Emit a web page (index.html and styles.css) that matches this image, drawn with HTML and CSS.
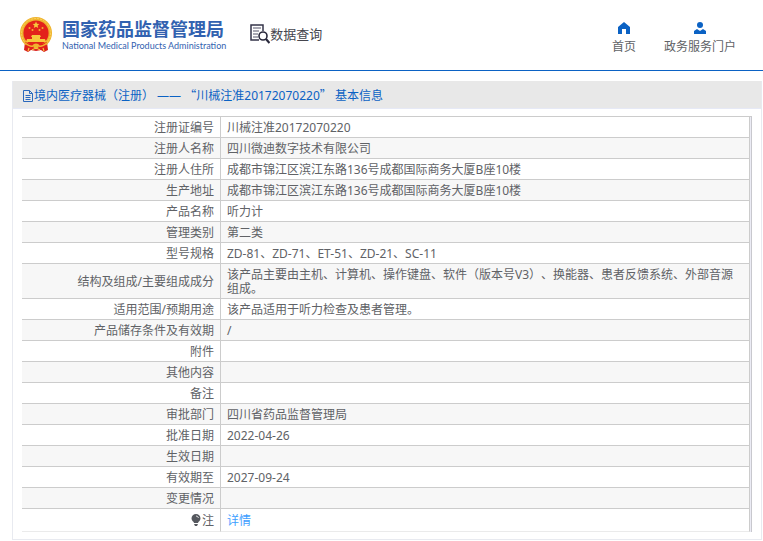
FILE: index.html
```html
<!DOCTYPE html>
<html lang="zh-CN">
<head>
<meta charset="utf-8">
<meta name="viewport" content="width=device-width, initial-scale=1">
<title>国家药品监督管理局 数据查询</title>
<link rel="stylesheet" href="styles.css">
</head>
<body>
<header class="header">
  <a class="brand" href="#">
    <svg class="emblem" viewBox="0 0 32 36" aria-hidden="true">
      <path d="M5 25 4 33l4 2 3-2 5 1 5-1 3 2 4-2-1-8z" fill="#d9201c"/>
      <circle cx="16" cy="16" r="16" fill="#f0b42e"/>
      <circle cx="16" cy="16" r="14.5" fill="none" stroke="#f8d25c" stroke-width="1" stroke-dasharray="2 1"/>
      <circle cx="16" cy="16" r="12.6" fill="#e3221b"/>
      <path d="m16 4.600 1 2.200 2.400.2-1.800 1.600.6 2.400-2.200-1.300-2.200 1.300.6-2.400L12.600 7l2.400-.2z" fill="#f6c83c"/>
      <g fill="#f0b42e"><circle cx="9.500" cy="11" r="1"/><circle cx="12.500" cy="13" r="1"/><circle cx="19.500" cy="13" r="1"/><circle cx="22.500" cy="11" r="1"/></g>
      <path d="M12 18h8l1 2h-1v2h5l1 3H6l1-3h5v-2h-1z" fill="#f6c83c"/>
      <path d="M5 25q11 5 22 0l-2 7H7z" fill="#e3221b"/>
      <path d="M5 26q5 4 8 3a3.500 3.500 0 0 1 6 0q3 1 8-3" fill="none" stroke="#f0b42e" stroke-width="1.500"/>
      <circle cx="16" cy="29.500" r="2.500" fill="#f0b42e"/>
      <path d="m9 31-1 3m15-3 1 3M12 33q4-3 8 0" fill="none" stroke="#f6c83c" stroke-width="1.200"/>
    </svg>
    <span class="brand-text">
      <span class="brand-cn">国家药品监督管理局</span>
      <span class="brand-en">National Medical Products Administration</span>
    </span>
  </a>
  <a class="section" href="#">
    <svg class="section-icon" viewBox="0 0 20 20" aria-hidden="true">
      <path d="M9 16H1V1h12v6" fill="none" stroke="#35354a" stroke-width="1.500"/>
      <path d="M3 4h8M3 7h6M3 10h5M3 13h5" stroke="#55556a" stroke-width="1.200"/>
      <circle cx="13" cy="12" r="4" fill="#fff" stroke="#29293c" stroke-width="1.600"/>
      <path d="m16 15 3.500 4" stroke="#29293c" stroke-width="2.200"/>
    </svg>
    <span>数据查询</span>
  </a>
  <nav class="nav">
    <a href="#">
      <svg class="nav-icon" viewBox="0 0 12 12" aria-hidden="true"><path d="M6 0 0 5v7h4V7h4v5h4V5z" fill="#0b62c4"/></svg>
      <span>首页</span>
    </a>
    <a href="#">
      <svg class="nav-icon" viewBox="0 0 12 12" aria-hidden="true"><circle cx="6" cy="3" r="3" fill="#0b62c4"/><path d="M0 12V9l3-2 3 2 3-2 3 2v3z" fill="#0b62c4"/></svg>
      <span>政务服务门户</span>
    </a>
  </nav>
</header>
<main class="panel">
  <h1 class="panel-title">
    <svg class="doc-icon" viewBox="0 0 12 12" aria-hidden="true"><path d="M1.500.500h6l3 3v8h-9zM7.500.500v3h3M3.500 5.500h5M3.500 7.500h5M3.500 9.500h5" fill="none" stroke="#2a68bd"/></svg>
    <span>境内医疗器械（注册） —— <span class="quote">“</span>川械注准20172070220<span class="quote">”</span> 基本信息</span>
  </h1>
  <div class="panel-body">
    <div class="table-frame">
      <table class="info">
        <tbody>
          <tr><th scope="row">注册证编号</th><td>川械注准20172070220</td></tr>
          <tr><th scope="row">注册人名称</th><td>四川微迪数字技术有限公司</td></tr>
          <tr><th scope="row">注册人住所</th><td>成都市锦江区滨江东路136号成都国际商务大厦B座10楼</td></tr>
          <tr><th scope="row">生产地址</th><td>成都市锦江区滨江东路136号成都国际商务大厦B座10楼</td></tr>
          <tr><th scope="row">产品名称</th><td>听力计</td></tr>
          <tr><th scope="row">管理类别</th><td>第二类</td></tr>
          <tr><th scope="row">型号规格</th><td>ZD-81、ZD-71、ET-51、ZD-21、SC-11</td></tr>
          <tr><th scope="row">结构及组成/主要组成成分</th><td>该产品主要由主机、计算机、操作键盘、软件（版本号V3）、换能器、患者反馈系统、外部音源组成。</td></tr>
          <tr><th scope="row">适用范围/预期用途</th><td>该产品适用于听力检查及患者管理。</td></tr>
          <tr><th scope="row">产品储存条件及有效期</th><td>/</td></tr>
          <tr><th scope="row">附件</th><td></td></tr>
          <tr><th scope="row">其他内容</th><td></td></tr>
          <tr><th scope="row">备注</th><td></td></tr>
          <tr><th scope="row">审批部门</th><td>四川省药品监督管理局</td></tr>
          <tr><th scope="row">批准日期</th><td>2022-04-26</td></tr>
          <tr><th scope="row">生效日期</th><td></td></tr>
          <tr><th scope="row">有效期至</th><td>2027-09-24</td></tr>
          <tr><th scope="row">变更情况</th><td></td></tr>
          <tr class="note"><th scope="row"><svg class="bulb" viewBox="0 0 10 12" aria-hidden="true"><path d="M5 0a4.500 4.500 0 0 1 4.500 4.500C9.500 7 7 7.500 7 9H3C3 7.500.500 7 .500 4.500A4.500 4.500 0 0 1 5 0zM3 10h4l-1 2H4z" fill="#55585e"/><path d="M5 2q2 0 2.500 2" fill="none" stroke="#fff" stroke-width=".8"/></svg>注</th><td><a href="#">详情</a></td></tr>
        </tbody>
      </table>
    </div>
  </div>
</main>
</body>
</html>
```
FILE: styles.css
```css
* {
  box-sizing: border-box;
}

body {
  margin: 0;
  background: #fff;
  color: #606266;
  font: 12px/14px "Noto Sans", "Noto Sans CJK SC", sans-serif;
  text-spacing-trim: space-all;
}

a {
  color: inherit;
  text-decoration: none;
}

.header {
  display: flex;
  align-items: center;
  height: 71px;
  padding: 0 27px 0 20px;
  border-bottom: 1px solid #0b62c4;
}

.brand {
  display: flex;
  align-items: center;
  gap: 10px;
  color: #3262b0;
}

.emblem {
  width: 32px;
  height: 36px;
}

.brand-text {
  display: flex;
  flex-direction: column;
}

.brand-cn {
  font-family: "Noto Sans CJK SC", sans-serif;
  font-size: 18px;
  line-height: 22px;
  font-weight: 700;
}

.brand-en {
  font-family: Lato, sans-serif;
  font-size: 9px;
  line-height: 14px;
  font-weight: 400;
}

.section {
  display: flex;
  align-items: center;
  margin-left: 24px;
  padding-bottom: 2px;
  color: #45454d;
  font-size: 13px;
  line-height: 20px;
}

.section-icon {
  width: 20px;
  height: 20px;
}

.nav {
  display: flex;
  gap: 28px;
  margin-left: auto;
  padding-top: 6px;
}

.nav a {
  display: flex;
  flex-direction: column;
  align-items: center;
  gap: 6px;
}

.nav-icon {
  width: 12px;
  height: 12px;
}

.panel {
  margin: 10px 1px 0 12px;
  border: 1px solid #e8eaf0;
  border-top: 0;
}

.panel-title {
  display: flex;
  align-items: center;
  height: 28px;
  margin: 0;
  padding: 2px 9px 0;
  border-bottom: 1px solid #e6e9f6;
  background: #e8e8e8;
  color: #0b62c4;
  font-size: 12px;
  font-weight: 400;
}

.quote {
  font-family: "Noto Sans CJK SC", sans-serif;
}

.doc-icon {
  width: 12px;
  height: 12px;
}

.panel-body {
  padding: 7px 9px;
}

.table-frame {
  padding-right: 1px;
  border-top: 1px solid #ccc;
  border-right: 1px solid #c8c8ce;
  background: #ebebf4;
}

.info {
  width: 100%;
  border-spacing: 0;
  background: #fff;
}

.info tr:nth-child(even) {
  background: #f7f7f7;
}

.info th,
.info td {
  height: 21px;
  padding: 4px 6px 2px;
  border-right: 1px solid #ccc;
  border-bottom: 1px solid #ccc;
  font-weight: 400;
}

.info th {
  width: 199px;
  text-align: right;
}

.info .note th,
.info .note td {
  height: 23px;
  border-bottom-color: #ebebeb;
}

.info td a {
  color: #409eff;
}

.bulb {
  width: 10px;
  height: 12px;
  margin-right: 1px;
  vertical-align: -1px;
}
```
